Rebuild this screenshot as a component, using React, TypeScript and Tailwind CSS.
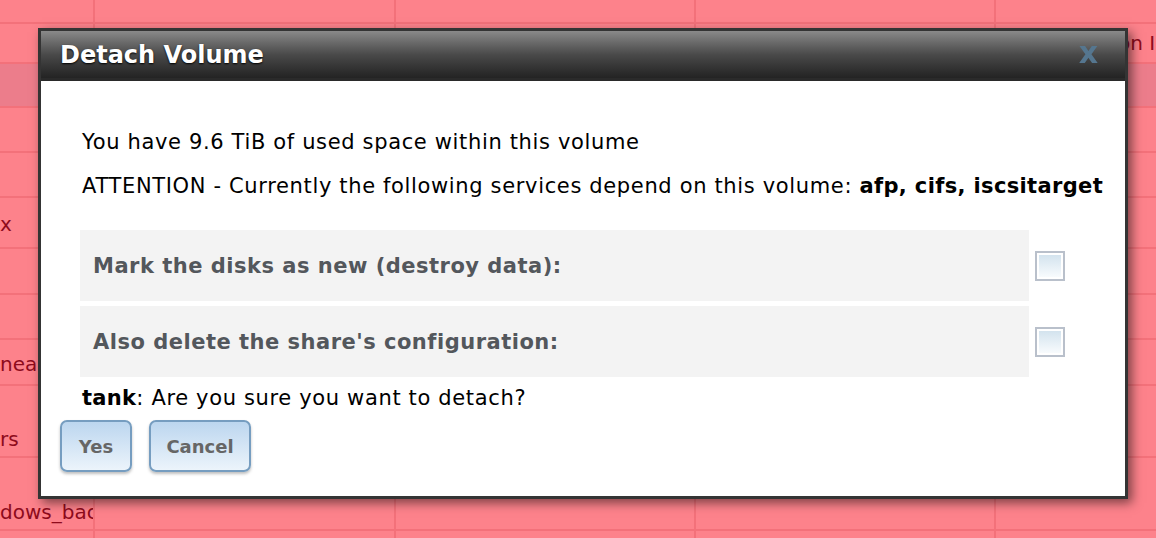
import React from 'react';

const font = { fontFamily: '"DejaVu Sans", Verdana, sans-serif' };

// background grid rows: [height, first cell text, last cell text, highlighted, text at bottom]
const rows: [number, string, string, boolean, boolean][] = [
  [24, '', '', false, false],
  [40, '', 'on I', false, false],
  [44, '', '', true, false],
  [45, '', '', false, false],
  [45, '', '', false, false],
  [51, 'x', '', false, false],
  [46, '', '', false, false],
  [45, '', '', false, false],
  [46, 'nea', '', false, false],
  [72, 'rs', '', false, true],
  [73, 'dows_backup', '', false, true],
  [40, '', '', false, false],
];

function BackgroundTable() {
  return (
    <div className="flex flex-col w-[1156px] bg-[#fd828b]">
      {rows.map(([h, first, last, hl, bottom], i) => (
        <div
          key={i}
          style={{ height: h }}
          className={`flex shrink-0 border-b-2 border-[#f3717a] text-[20px] leading-[24px] text-[#8e0b1c] ${hl ? 'bg-[#ec7d8b]' : ''}`}
        >
          <div
            className={`w-[95px] shrink-0 overflow-hidden whitespace-nowrap flex border-r-2 border-[#f3717a] ${bottom ? 'items-end pb-[5px]' : 'items-center pt-[3px]'}`}
          >
            {first}
          </div>
          <div className="w-[301px] shrink-0 border-r-2 border-[#f3717a]" />
          <div className="w-[300px] shrink-0 border-r-2 border-[#f3717a]" />
          <div className="w-[300px] shrink-0 border-r-2 border-[#f3717a]" />
          <div className="flex-1 overflow-hidden whitespace-nowrap flex items-center pl-[122px]">
            {last}
          </div>
        </div>
      ))}
    </div>
  );
}

function Checkbox() {
  return (
    <div className="w-[30px] h-[30px] border-2 border-[#b9c0cb] bg-white p-[2px]">
      <div className="w-full h-full bg-gradient-to-b from-[#d3e3ee] to-[#f8fbfd]" />
    </div>
  );
}

function OptionRow({ label }: { label: string }) {
  return (
    <div className="flex items-center">
      <div className="w-[949px] h-[71px] bg-[#f3f3f3] flex items-center pl-[13px] text-[21px] tracking-[0.5px] font-bold text-[#53575c]">
        {label}
      </div>
      <div className="ml-[6px]">
        <Checkbox />
      </div>
    </div>
  );
}

function DialogButton({ children, w }: { children: React.ReactNode; w: string }) {
  return (
    <button
      className={`${w} h-[52px] rounded-[7px] border-2 border-[#769dc0] bg-gradient-to-b from-[#bcd6ef] to-[#ecf4fb] text-[18px] font-bold text-[#666] shadow-[0_2px_3px_rgba(0,0,0,0.25)]`}
    >
      {children}
    </button>
  );
}

export default function App() {
  return (
    <div className="relative w-[1156px] h-[538px] overflow-hidden" style={font}>
      <BackgroundTable />

      {/* modal dialog */}
      <div className="absolute left-[38px] top-[28px] w-[1090px] h-[471px] border-[3px] border-[#343434] bg-white shadow-[4px_4px_10px_rgba(0,0,0,0.5)] flex flex-col">
        <div className="h-[50px] bg-gradient-to-b from-[#8a8a8a] via-[#4a4a4a] to-[#232323] border-b-[3px] border-[#2a2a2a] flex items-center justify-between pl-[19px] pr-[27px] shrink-0">
          <span className="text-[24px] font-bold text-white [text-shadow:0_1px_2px_#000]">Detach Volume</span>
          <span className="text-[30px] font-bold text-[#55768f] blur-[0.7px] leading-none -mt-[4px]">x</span>
        </div>

        <div className="flex flex-col pl-[41px] text-[21px] leading-[30px] tracking-[0.65px] text-black">
          <p className="mt-[46px]">You have 9.6 TiB of used space within this volume</p>
          <p className="mt-[14px] whitespace-nowrap">
            ATTENTION - Currently the following services depend on this volume:{' '}
            <b className="tracking-[0.35px]">afp, cifs, iscsitarget</b>
          </p>
          <div className="mt-[29px] -ml-[2px] flex flex-col gap-[5px] tracking-normal">
            <OptionRow label="Mark the disks as new (destroy data):" />
            <OptionRow label="Also delete the share's configuration:" />
          </div>
          <p className="mt-[6px]">
            <b className="tracking-[0.3px]">tank</b>: Are you sure you want to detach?
          </p>
        </div>

        <div className="flex gap-[17px] pl-[19px] mt-[7px]">
          <DialogButton w="w-[72px]">Yes</DialogButton>
          <DialogButton w="w-[102px]">Cancel</DialogButton>
        </div>
      </div>
    </div>
  );
}
